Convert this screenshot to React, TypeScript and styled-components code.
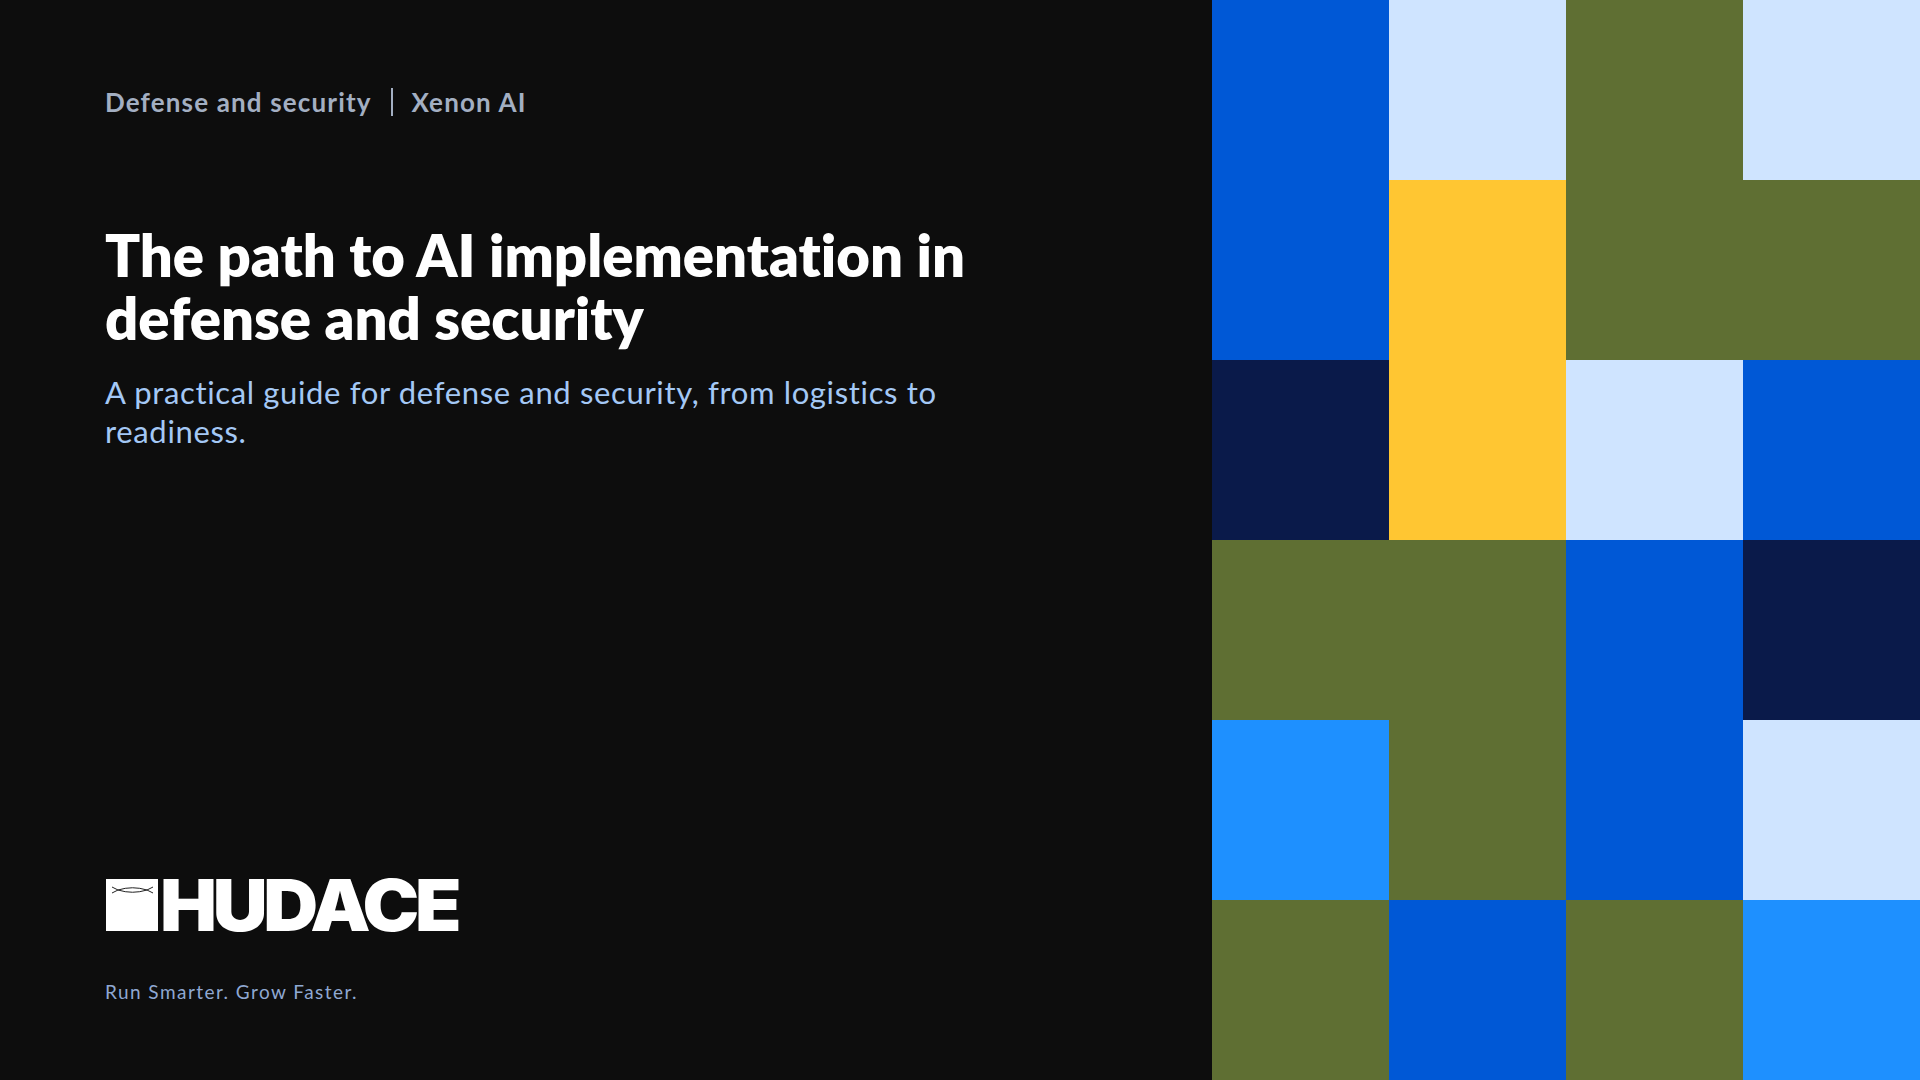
import * as React from 'react';
import styled, { createGlobalStyle } from 'styled-components';

type Tone = 'blue' | 'light' | 'olive' | 'yellow' | 'navy' | 'sky';

const tones: Record<Tone, string> = {
	blue: '#0058d6',
	light: '#cfe4ff',
	olive: '#5f6f33',
	yellow: '#ffc632',
	navy: '#0a1a4a',
	sky: '#1e90ff',
};

const cells: Tone[] = [
	'blue', 'light', 'olive', 'light',
	'blue', 'yellow', 'olive', 'olive',
	'navy', 'yellow', 'light', 'blue',
	'olive', 'olive', 'blue', 'navy',
	'sky', 'olive', 'blue', 'light',
	'olive', 'blue', 'olive', 'sky',
];

const GlobalStyle = createGlobalStyle`
	html, body {
		margin: 0;
		padding: 0;
		background: #0d0d0d;
	}
`;

const Slide = styled.div`
	display: flex;
	width: 1920px;
	height: 1080px;
	overflow: hidden;
	background: #0d0d0d;
	font-family: Lato, "Noto Sans", sans-serif;
	font-variant-ligatures: none;
`;

const Content = styled.div`
	flex: 1;
	display: flex;
	flex-direction: column;
	justify-content: space-between;
	padding: 87px 180px 76px 105px;
`;

const Eyebrow = styled.div`
	display: flex;
	align-items: center;
	gap: 19px;
	font-size: 26px;
	line-height: 30px;
	font-weight: 700;
	letter-spacing: 1.15px;
	color: #a3afc2;
`;

const Divider = styled.span`
	width: 2px;
	height: 28px;
	background: #a3afc2;
`;

const Title = styled.h1`
	margin: 106px 0 0;
	font-size: 58px;
	line-height: 63px;
	font-weight: 800;
	color: #ffffff;
`;

const Subtitle = styled.p`
	margin: 24px 0 0;
	font-size: 31px;
	line-height: 39px;
	font-weight: 400;
	letter-spacing: 0.65px;
	color: #a4c8f5;
`;

const Logo = styled.div`
	display: flex;
	align-items: center;
	gap: 2px;
	height: 52px;
	margin-left: 1px;
`;

const Wordmark = styled.span`
	font-family: Inter, sans-serif;
	font-size: 71px;
	line-height: 52px;
	font-weight: 900;
	letter-spacing: -4px;
	color: #ffffff;
	transform: scaleX(1.07);
	transform-origin: left center;
`;

const Tagline = styled.div`
	margin-top: 49px;
	font-size: 19px;
	line-height: 24px;
	letter-spacing: 1.45px;
	color: #8fa8d2;
`;

const Mosaic = styled.div`
	display: grid;
	grid-template-columns: repeat(4, 177px);
	grid-template-rows: repeat(6, 180px);
	flex: none;
`;

const Cell = styled.div<{ $tone: Tone }>`
	background: ${(p) => tones[p.$tone]};
`;

const LogoMark = () => (
	<svg width="52" height="52" viewBox="0 0 52 52">
		<rect width="52" height="52" fill="#ffffff" />
		<path
			d="M6 8 L12 11 Q26.5 6.5 41 11 L47 8 M6 14 L12 11 Q26.5 15.5 41 11 L47 14"
			fill="none"
			stroke="#222222"
			strokeWidth="1"
		/>
	</svg>
);

export default function App() {
	return (
		<Slide>
			<GlobalStyle />
			<Content>
				<div>
					<Eyebrow>
						<span>Defense and security</span>
						<Divider />
						<span>Xenon AI</span>
					</Eyebrow>
					<Title>The path to AI implementation in defense and security</Title>
					<Subtitle>A practical guide for defense and security, from logistics to readiness.</Subtitle>
				</div>
				<div>
					<Logo>
						<LogoMark />
						<Wordmark>HUDACE</Wordmark>
					</Logo>
					<Tagline>Run Smarter. Grow Faster.</Tagline>
				</div>
			</Content>
			<Mosaic>
				{cells.map((tone, i) => (
					<Cell key={i} $tone={tone} />
				))}
			</Mosaic>
		</Slide>
	);
}
